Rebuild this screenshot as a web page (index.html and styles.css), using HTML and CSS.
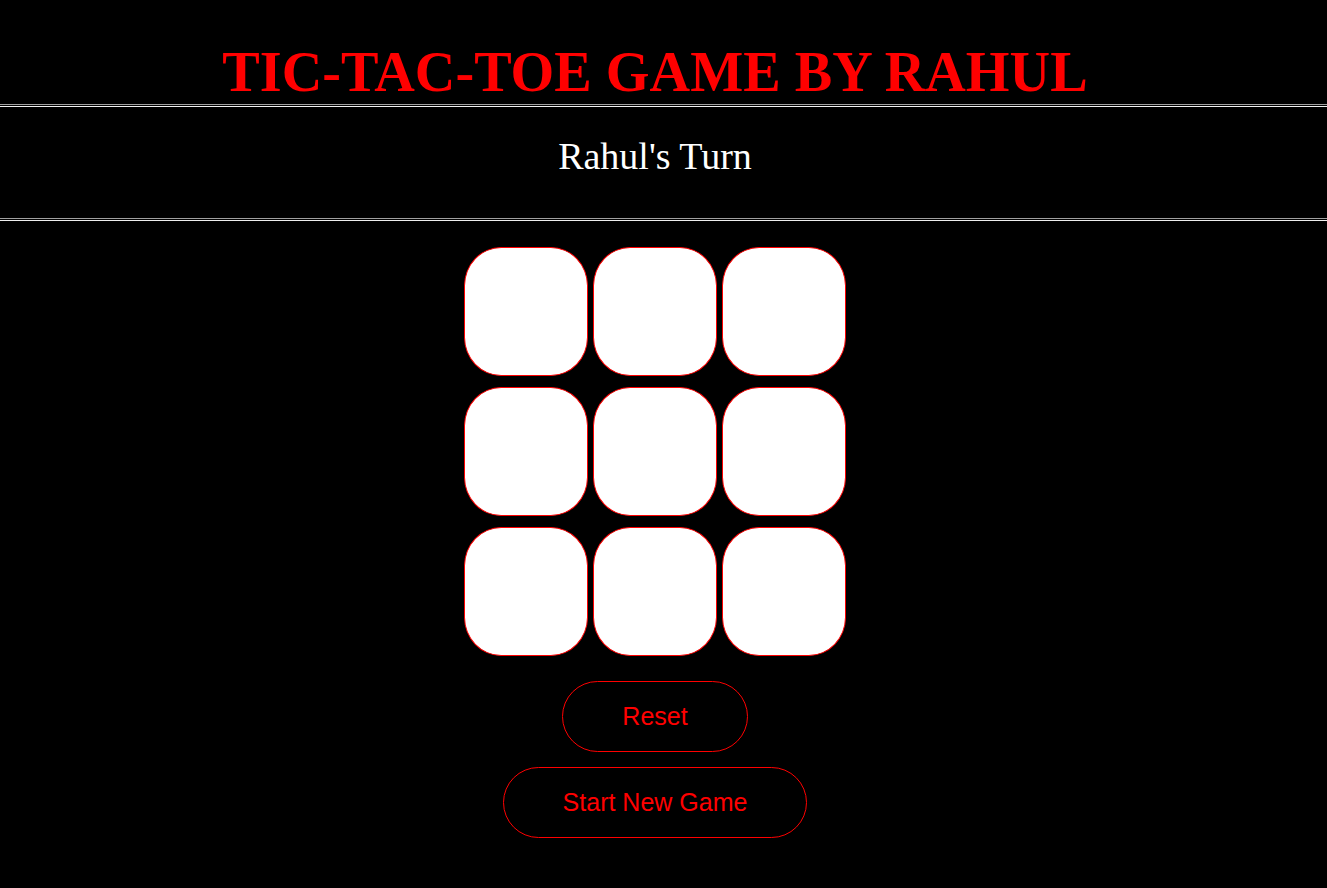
FILE: index.html
```html
<!DOCTYPE html>
<html lang="en">
<head>
<meta charset="utf-8">
<title>Tic-Tac-Toe</title>
<link rel="stylesheet" href="styles.css">
</head>
<body>
  <h1 class="title center">TIC-TAC-TOE GAME BY RAHUL</h1>
  <hr class="rule">
  <p class="turn center">Rahul's Turn</p>
  <hr class="rule">
  <main class="game center">
    <div class="board">
      <button class="cell"></button>
      <button class="cell"></button>
      <button class="cell"></button>
      <button class="cell"></button>
      <button class="cell"></button>
      <button class="cell"></button>
      <button class="cell"></button>
      <button class="cell"></button>
      <button class="cell"></button>
    </div>
    <button class="action">Reset</button>
    <button class="action">Start New Game</button>
  </main>
</body>
</html>
```
FILE: styles.css
```css
html, body {
  margin: 0;
  background: #000;
}
body {
  font-family: "Liberation Serif", "Times New Roman", serif;
}
.center {
  padding-right: 17px;
  text-align: center;
}
.title {
  margin: 40px 0 0;
  font-size: 56.2px;
  font-weight: bold;
  color: #ff0000;
  line-height: normal;
}
.rule {
  margin: 0;
  border: 0;
  height: 1px;
  border-top: 1px solid #a0a0a0;
  border-bottom: 1px solid #f0f0f0;
}
.turn {
  margin: 27px 0 40px;
  font-size: 38px;
  color: #fff;
  line-height: normal;
}
.game {
  display: flex;
  flex-direction: column;
  align-items: center;
  padding-top: 26px;
}
.board {
  display: grid;
  grid-template-columns: repeat(3, 124px);
  grid-auto-rows: 129px;
  column-gap: 5px;
  row-gap: 11px;
  margin-bottom: 25px;
}
.cell {
  box-sizing: border-box;
  margin: 0;
  padding: 0;
  background: #fff;
  border: 1px solid #ff0000;
  border-radius: 30%;
}
.action {
  margin: 0 0 15px;
  padding: 20px 59px;
  background: #000;
  color: #ff0000;
  border: 1px solid #ff0000;
  border-radius: 40px;
  font-family: "Liberation Sans", Arial, sans-serif;
  font-size: 25px;
  line-height: normal;
}
```
